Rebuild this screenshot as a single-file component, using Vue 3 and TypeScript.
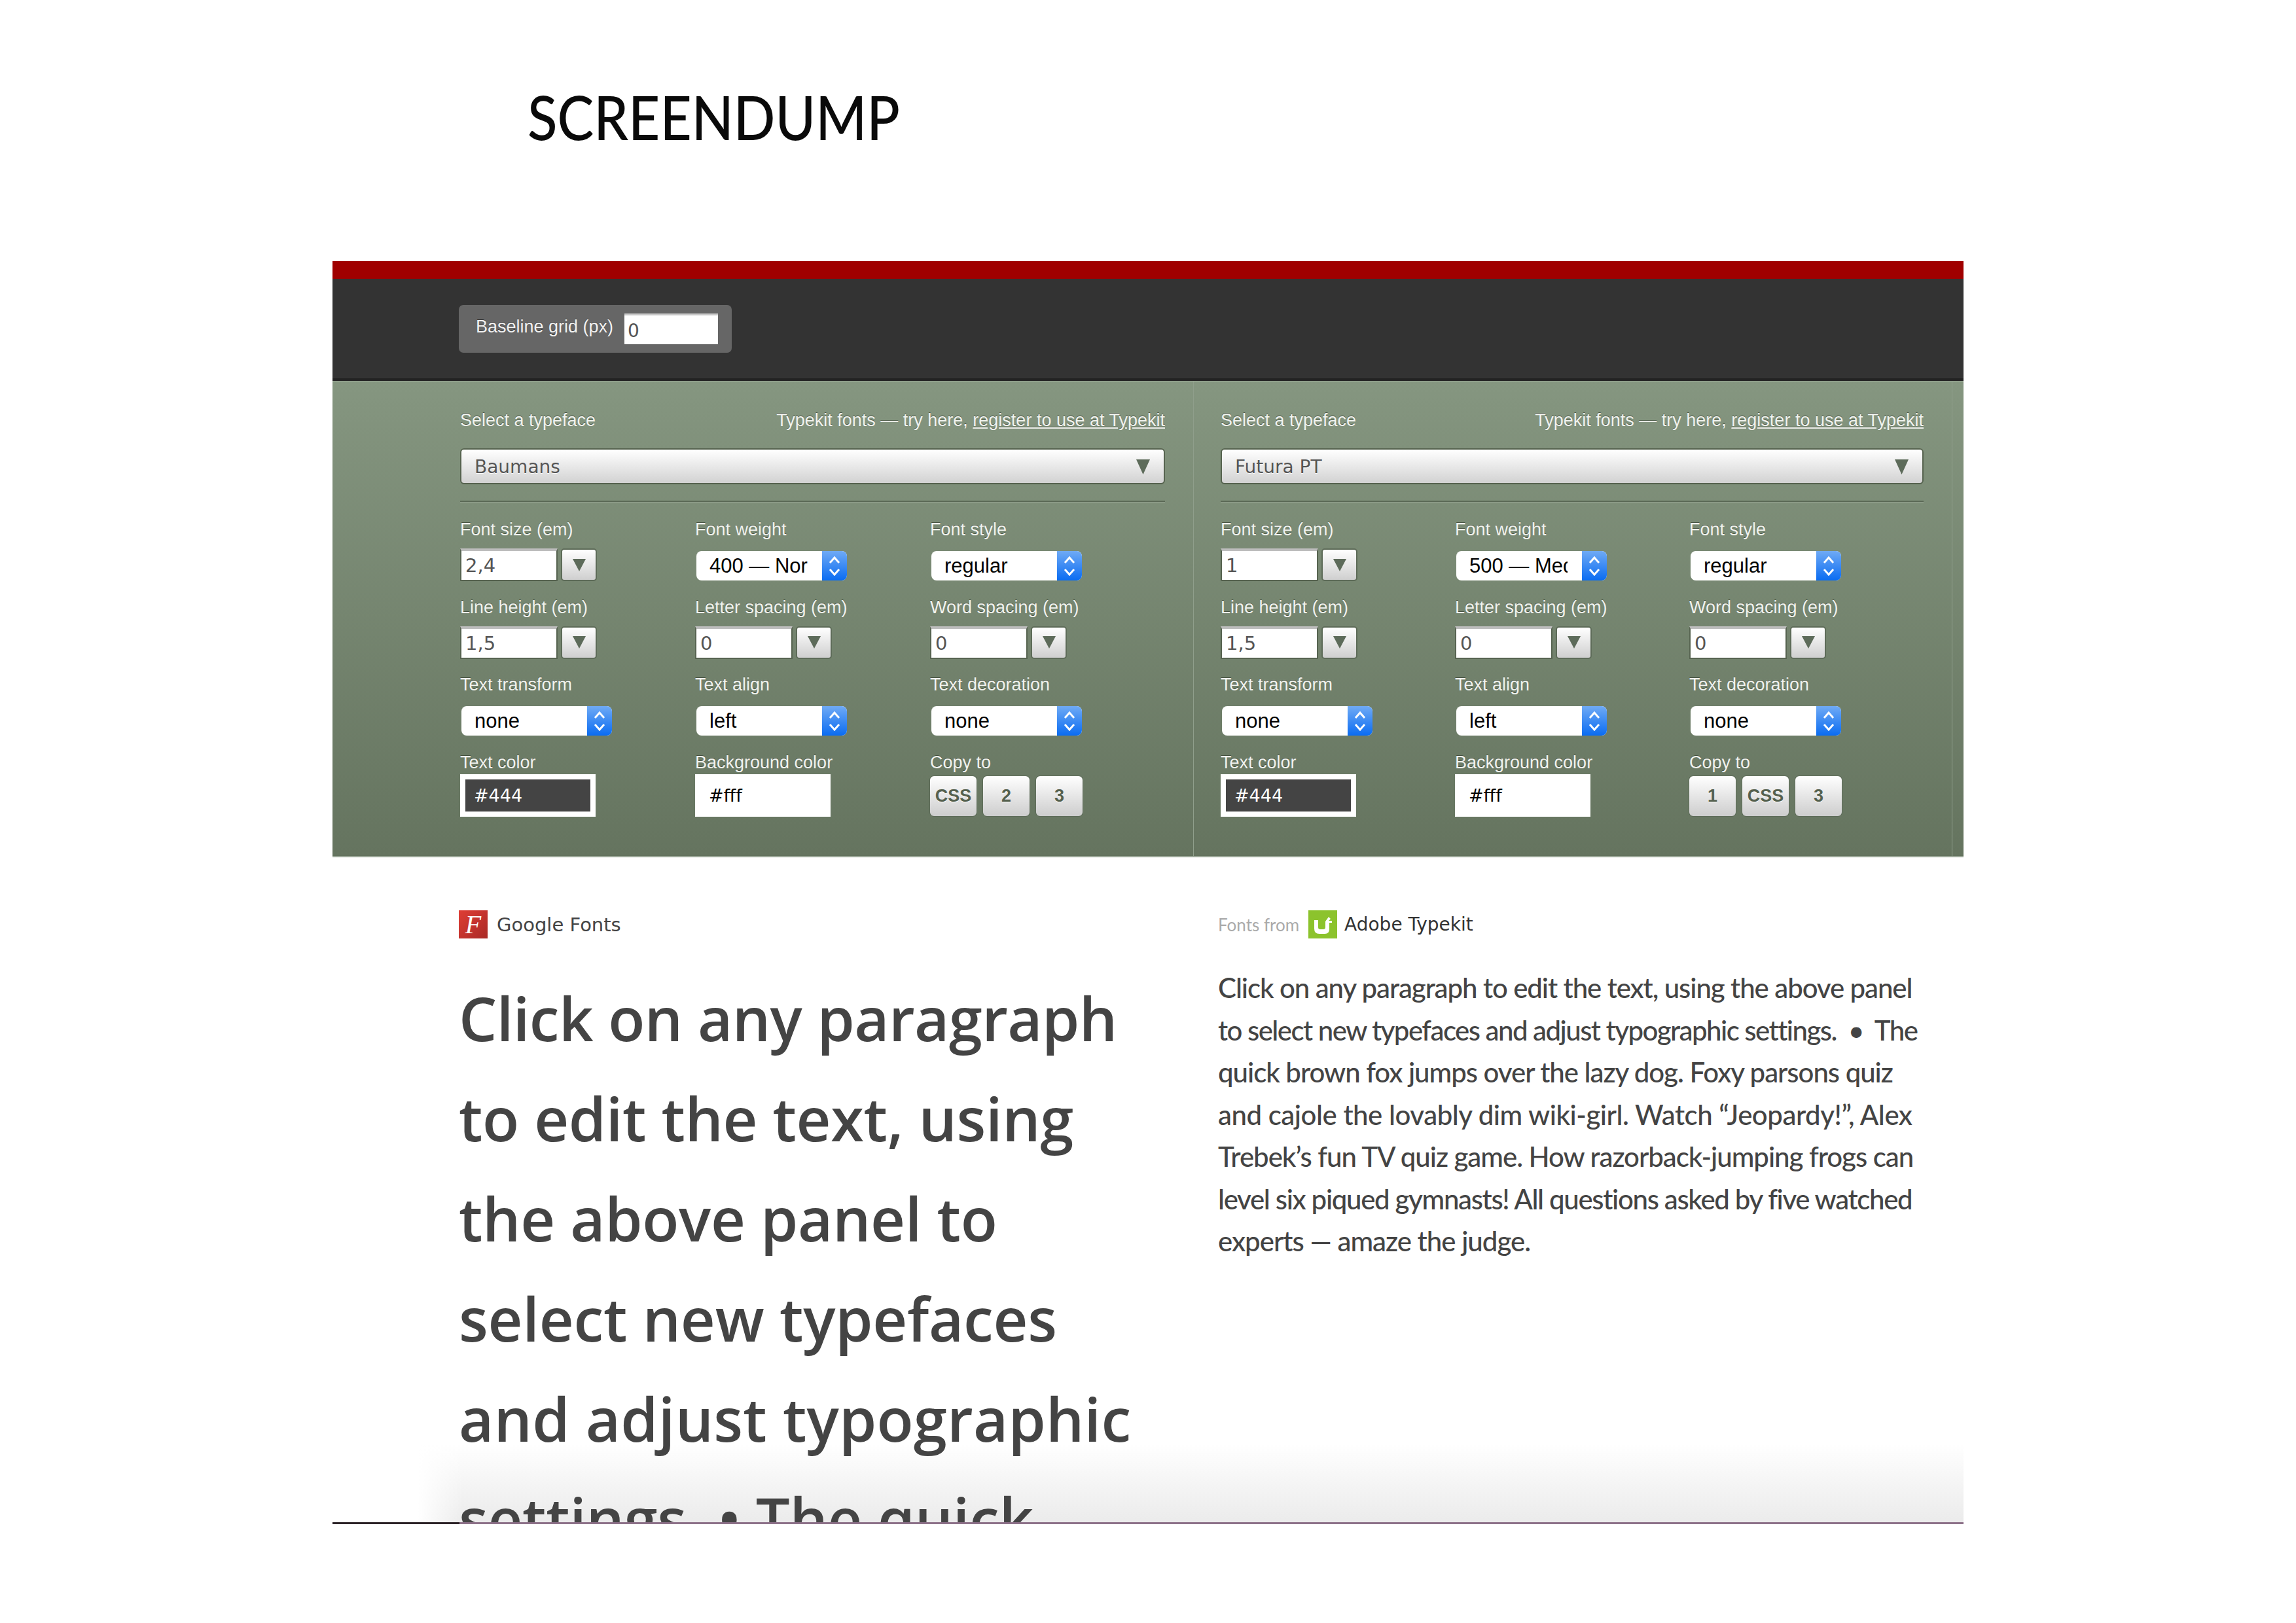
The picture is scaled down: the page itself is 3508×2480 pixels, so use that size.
<script setup lang="ts">
type Field =
  | { kind: 'number'; label: string; value: string }
  | { kind: 'select'; label: string; value: string }
  | { kind: 'swatch'; label: string; value: string; dark: boolean }
  | { kind: 'copy'; label: string; buttons: string[] }

interface Panel {
  typeface: string
  fields: Field[]
}

function panelFields(size: string, weight: string, buttons: string[]): Field[] {
  return [
    { kind: 'number', label: 'Font size (em)', value: size },
    { kind: 'select', label: 'Font weight', value: weight },
    { kind: 'select', label: 'Font style', value: 'regular' },
    { kind: 'number', label: 'Line height (em)', value: '1,5' },
    { kind: 'number', label: 'Letter spacing (em)', value: '0' },
    { kind: 'number', label: 'Word spacing (em)', value: '0' },
    { kind: 'select', label: 'Text transform', value: 'none' },
    { kind: 'select', label: 'Text align', value: 'left' },
    { kind: 'select', label: 'Text decoration', value: 'none' },
    { kind: 'swatch', label: 'Text color', value: '#444', dark: true },
    { kind: 'swatch', label: 'Background color', value: '#fff', dark: false },
    { kind: 'copy', label: 'Copy to', buttons }
  ]
}

const panels: Panel[] = [
  { typeface: 'Baumans', fields: panelFields('2,4', '400 — Normal', ['CSS', '2', '3']) },
  { typeface: 'Futura PT', fields: panelFields('1', '500 — Medium', ['1', 'CSS', '3']) }
]

// tracking per line, the fallback fonts don't set the same widths as Baumans / Futura
const bigLines = [
  { text: 'Click on any paragraph', tracking: -0.6 },
  { text: 'to edit the text, using', tracking: -0.4 },
  { text: 'the above panel to', tracking: -0.35 },
  { text: 'select new typefaces', tracking: -0.25 },
  { text: 'and adjust typographic', tracking: 0.2 },
  { text: 'settings. • The quick', tracking: -0.35 }
]

const smallLines = [
  { text: 'Click on any paragraph to edit the text, using the above panel', tracking: -1.1 },
  { text: 'to select new typefaces and adjust typographic settings.  •  The', tracking: -1.55 },
  { text: 'quick brown fox jumps over the lazy dog. Foxy parsons quiz', tracking: -1.04 },
  { text: 'and cajole the lovably dim wiki-girl. Watch “Jeopardy!”, Alex', tracking: -0.49 },
  { text: 'Trebek’s fun TV quiz game. How razorback-jumping frogs can', tracking: -1.04 },
  { text: 'level six piqued gymnasts! All questions asked by five watched', tracking: -1.35 },
  { text: 'experts — amaze the judge.', tracking: -1 }
]
</script>

<template>
  <div class="page">
    <header class="title-wrap">
      <h1 class="title">SCREENDUMP</h1>
    </header>

    <div class="frame">
      <div class="grid-bar">
        <div class="grid-box">
          <span>Baseline grid (px)</span>
          <div class="grid-input">0</div>
        </div>
      </div>

      <div class="panels">
        <section v-for="panel in panels" :key="panel.typeface" class="panel">
          <div class="panel-head">
            <span>Select a typeface</span>
            <span>Typekit fonts — try here, <u>register to use at Typekit</u></span>
          </div>
          <div class="face-select">
            <span>{{ panel.typeface }}</span>
            <svg width="21" height="23" viewBox="0 0 21 23"><polygon points="0,0 21,0 10.5,23" fill="#5d6b5a" /></svg>
          </div>
          <div class="divider"></div>
          <div class="fields">
            <div v-for="field in panel.fields" :key="field.label" class="field" :class="`field-${field.kind}`">
              <label>{{ field.label }}</label>

              <div v-if="field.kind === 'number'" class="number">
                <div class="number-input">{{ field.value }}</div>
                <div class="number-btn">
                  <svg width="20" height="19" viewBox="0 0 20 19"><polygon points="0,0 20,0 10,19" fill="#5d6b5a" /></svg>
                </div>
              </div>

              <div v-else-if="field.kind === 'select'" class="native-select">
                <span class="native-value">{{ field.value }}</span>
                <div class="native-cap">
                  <svg width="18" height="32" viewBox="0 0 18 32" fill="none" stroke="#fff" stroke-width="3">
                    <path d="M2 11 L9 3 L16 11" />
                    <path d="M2 21 L9 29 L16 21" />
                  </svg>
                </div>
              </div>

              <div v-else-if="field.kind === 'swatch'" class="swatch">
                <div class="swatch-inner" :class="{ 'swatch-dark': field.dark }">{{ field.value }}</div>
              </div>

              <div v-else class="copy">
                <button v-for="b in field.buttons" :key="b" class="copy-btn">{{ b }}</button>
              </div>
            </div>
          </div>
        </section>
      </div>

      <div class="samples">
        <article class="sample-left">
          <div class="source">
            <div class="gf-icon">F</div>
            <span class="gf-name">Google Fonts</span>
          </div>
          <p class="big-text">
            <span
              v-for="line in bigLines"
              :key="line.text"
              :style="{ letterSpacing: `${line.tracking}px` }"
            >{{ line.text }}</span>
          </p>
        </article>
        <article class="sample-right">
          <div class="source">
            <span class="tk-from">Fonts from</span>
            <svg class="tk-icon" width="44" height="43" viewBox="0 0 44 43">
              <rect width="44" height="43" fill="#8cc32d" />
              <path d="M9 15 H15 V26 Q15 29 18 29 H23 Q26 29 26 26 V17 L31 10 L34 13 L31 16 H36 V19 H32 V29 Q32 36 25 36 H17 Q9 36 9 28 Z" fill="#fff" />
            </svg>
            <span class="tk-name">Adobe Typekit</span>
          </div>
          <p class="small-text">
            <span
              v-for="line in smallLines"
              :key="line.text"
              :style="{ letterSpacing: `${line.tracking}px` }"
            >{{ line.text }}</span>
          </p>
        </article>
      </div>
      <div class="rule"></div>
    </div>
  </div>
</template>

<style>
html,
body {
  margin: 0;
  background: #fff;
}
</style>

<style scoped>
.page {
  width: 3508px;
  height: 2480px;
  background: #fff;
  overflow: hidden;
  font-family: "Liberation Sans", Arial, sans-serif;
}

.title-wrap {
  height: 399px;
  padding-left: 806px;
  box-sizing: border-box;
}

.title {
  margin: 0;
  padding-top: 118px;
  font-family: Lato, sans-serif;
  font-weight: 500;
  font-size: 93px;
  line-height: 120px;
  color: #0a0a0a;
  transform: scaleX(0.9);
  transform-origin: left;
}

.frame {
  margin-left: 508px;
  width: 2492px;
}

/* top strip */
.grid-bar {
  height: 183px;
  box-sizing: border-box;
  border-top: 27px solid #a00000;
  border-bottom: 4px solid #232323;
  padding: 40px 0 0 193px;
  background: #333;
}

.grid-box {
  width: 417px;
  height: 73px;
  box-sizing: border-box;
  padding: 13px 21px 0 26px;
  display: flex;
  justify-content: space-between;
  background: #666;
  border-radius: 7px;
  color: #f2f2f2;
  font-size: 27px;
  line-height: 40px;
  text-shadow: 0 -1px 0 #333;
  white-space: nowrap;
}

.grid-input {
  width: 143px;
  height: 47px;
  box-sizing: border-box;
  padding: 4px 0 0 5px;
  background: #fff;
  border-top: 3px solid #c8c8c8;
  color: #555;
  text-shadow: none;
  font-family: "DejaVu Sans", sans-serif;
  font-size: 28px;
}

/* green settings area */
.panels {
  display: grid;
  grid-template-columns: 1315px 1160px;
  height: 728px;
  background: linear-gradient(#859680, #65745f);
  border-top: 1px solid #97a692;
  box-sizing: border-box;
  border-bottom: 2px solid #9aa696;
}

.panel {
  padding: 42px 0 0 195px;
  width: 1077px;
  color: #f1f3ef;
  text-shadow: 0 -1px 0 rgba(50, 60, 45, 0.7);
  font-size: 27px;
}

.panel + .panel {
  padding-left: 41px;
  width: 1074px;
  border-left: 1px solid #8f9e8b;
  border-right: 1px solid #8f9e8b;
  padding-right: 43px;
}

.panel-head {
  display: flex;
  justify-content: space-between;
  line-height: 34px;
  white-space: nowrap;
}

.face-select {
  margin-top: 26px;
  height: 55px;
  box-sizing: border-box;
  padding: 2px 21px 0 20px;
  display: flex;
  align-items: center;
  justify-content: space-between;
  background: linear-gradient(#fff, #d2d2d2);
  border: 2px solid #56634f;
  border-radius: 6px;
  color: #555;
  text-shadow: 0 1px 0 #fff;
  font-family: "DejaVu Sans", sans-serif;
  font-size: 28px;
}

.divider {
  margin-top: 25px;
  height: 2px;
  background: #5b6a56;
  border-bottom: 2px solid #8b9a86;
}

.fields {
  margin-top: 23px;
  display: grid;
  grid-template-columns: repeat(3, 1fr);
  grid-auto-rows: 118.5px;
}

.field label {
  display: block;
  line-height: 34px;
  white-space: nowrap;
}

.number {
  margin-top: 12px;
  display: flex;
  gap: 5px;
}

.number-input {
  width: 149px;
  height: 50px;
  box-sizing: border-box;
  padding-left: 6px;
  background: #fff;
  border: 2px solid #566350;
  border-top: 4px solid #bdbdbd;
  color: #555;
  text-shadow: none;
  font-family: "DejaVu Sans", sans-serif;
  font-size: 29px;
  line-height: 44px;
}

.number-btn {
  width: 55px;
  height: 50px;
  display: flex;
  align-items: center;
  justify-content: center;
  box-sizing: border-box;
  background: linear-gradient(#fff, #cfcfcf);
  border: 2px solid #5d6b58;
  border-radius: 5px;
}

.native-select {
  margin: 16px 0 0 2px;
  width: 230px;
  height: 45px;
  display: flex;
  background: #fff;
  border-radius: 8px;
  overflow: hidden;
  color: #000;
  text-shadow: none;
  font-size: 31px;
  line-height: 45px;
}

.native-value {
  flex: 1;
  margin: 0 22px 0 20px;
  white-space: nowrap;
  overflow: hidden;
}

.native-cap {
  width: 38px;
  display: flex;
  align-items: center;
  justify-content: center;
  background: linear-gradient(#6faaf5, #0a6cf2);
}

.swatch {
  margin-top: 1px;
  width: 207px;
  height: 65px;
  box-sizing: border-box;
  background: #fff;
  padding: 8px;
}

.swatch-inner {
  height: 100%;
  padding-left: 13px;
  box-sizing: border-box;
  color: #000;
  text-shadow: none;
  font-family: "DejaVu Sans", sans-serif;
  font-size: 27px;
  line-height: 49px;
}

.swatch-dark {
  background: #444;
  color: #fff;
}

.copy {
  margin-top: 4px;
  display: flex;
  gap: 10px;
}

.copy-btn {
  width: 71px;
  height: 61px;
  padding: 0;
  background: linear-gradient(#fff, #cdcdcd);
  border: 0;
  border-radius: 6px;
  box-shadow: 0 0 0 1px #5d6b58;
  color: #55614f;
  text-shadow: 0 1px 0 #fff;
  font-family: "Liberation Sans", sans-serif;
  font-weight: 700;
  font-size: 27px;
}

/* text samples */
.samples {
  height: 1016px;
  overflow: hidden;
  display: grid;
  grid-template-columns: 1353px 1139px;
  background:
    linear-gradient(to right, #fff, rgba(255, 255, 255, 0)) 130px bottom / 70px 120px no-repeat,
    linear-gradient(#fff, #ebebeb) 130px bottom / 2362px 120px no-repeat;
}

.source {
  height: 43px;
  margin-top: 81px;
  display: flex;
  align-items: center;
  white-space: nowrap;
}

.sample-left {
  padding-left: 193px;
}

.gf-icon {
  width: 44px;
  height: 43px;
  background: linear-gradient(135deg, #df3d35, #a92a26);
  color: #fff;
  text-align: center;
  font-family: "Liberation Serif", serif;
  font-style: italic;
  font-size: 40px;
  line-height: 43px;
}

.gf-name {
  margin-left: 14px;
  font-family: "DejaVu Sans", sans-serif;
  font-size: 29px;
  color: #444;
}

.big-text {
  margin: 45px 0 0;
  font-family: "Open Sans", sans-serif;
  font-weight: 600;
  font-size: 92px;
  line-height: 153px;
  color: #444;
  white-space: nowrap;
}

.big-text span,
.small-text span {
  display: block;
}

.tk-from {
  font-family: Lato, sans-serif;
  font-size: 26px;
  color: #aaa;
}

.tk-icon {
  margin-left: 14px;
}

.tk-name {
  margin-left: 11px;
  font-family: "DejaVu Sans", sans-serif;
  font-size: 28px;
  color: #333;
}

.small-text {
  margin: 43px 0 0;
  font-family: Lato, sans-serif;
  font-weight: 500;
  font-size: 42px;
  line-height: 64.5px;
  color: #444;
  white-space: pre;
}

.rule {
  height: 3px;
  background: linear-gradient(to right, #2b2226 0 194px, #8c7088 194px);
}
</style>
